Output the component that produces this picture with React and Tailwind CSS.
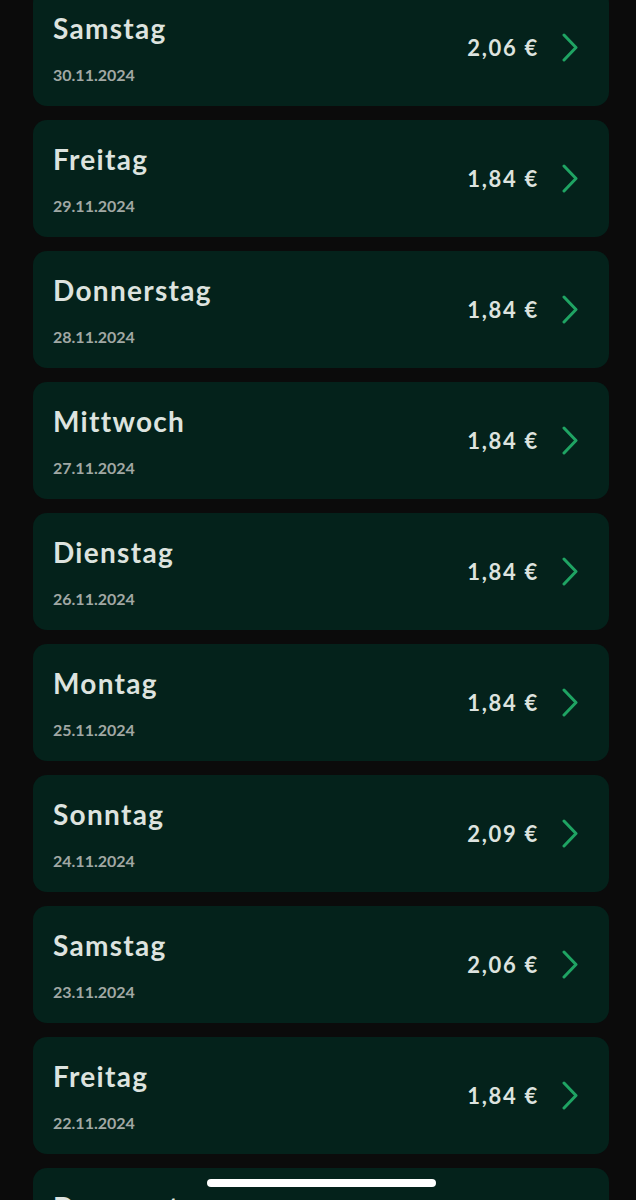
import React from "react";

const rows = [
  ["Samstag", "30.11.2024", "2,06 €"],
  ["Freitag", "29.11.2024", "1,84 €"],
  ["Donnerstag", "28.11.2024", "1,84 €"],
  ["Mittwoch", "27.11.2024", "1,84 €"],
  ["Dienstag", "26.11.2024", "1,84 €"],
  ["Montag", "25.11.2024", "1,84 €"],
  ["Sonntag", "24.11.2024", "2,09 €"],
  ["Samstag", "23.11.2024", "2,06 €"],
  ["Freitag", "22.11.2024", "1,84 €"],
  ["Donnerstag", "21.11.2024", "1,84 €"],
];

function Chevron() {
  return (
    <svg width="16" height="29" viewBox="0 0 16 29" fill="none">
      <polyline
        points="2,2 14,14.5 2,27"
        stroke="#1fa463"
        strokeWidth="3"
        strokeLinecap="round"
        strokeLinejoin="round"
      />
    </svg>
  );
}

export default function App() {
  return (
    <div
      className="relative h-[1200px] w-full overflow-hidden bg-[#0b0b0b]"
      style={{ fontFamily: "Lato, 'Noto Sans', sans-serif" }}
    >
      <div className="mt-[-11px] ml-[33px] mr-[27px] flex flex-col gap-[14px]">
        {rows.map(([day, date, price], i) => (
          <div
            key={i}
            className="flex h-[117px] items-center justify-between rounded-[14px] bg-[#04221b] pl-[20px] pr-[31px]"
          >
            <div className="flex flex-col">
              <div className="text-[28px] font-bold leading-[34px] tracking-[1.3px] text-[#dde3df]">
                {day}
              </div>
              <div className="mt-[20px] text-[16px] font-bold leading-[20px] text-[#a1a8a4]">
                {date}
              </div>
            </div>
            <div className="flex items-center gap-[23px]">
              <span className="text-[22px] font-bold tracking-[1.7px] text-[#dde3df]">{price}</span>
              <Chevron />
            </div>
          </div>
        ))}
      </div>
      <div className="absolute left-[207px] top-[1179px] h-[8px] w-[229px] rounded-full bg-white" />
    </div>
  );
}
